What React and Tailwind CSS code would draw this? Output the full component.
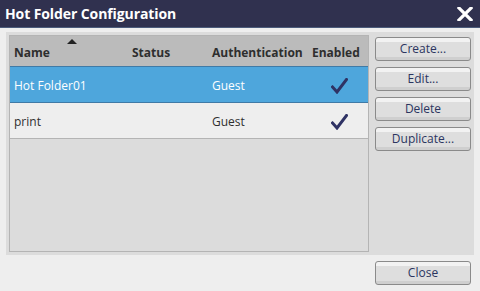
import React from "react";

const rows = [
  { name: "Hot Folder01", status: "", auth: "Guest", enabled: true, selected: true },
  { name: "print", status: "", auth: "Guest", enabled: true, selected: false },
];

function Check() {
  return (
    <svg width="17" height="16" viewBox="0 0 17 16" className="block">
      <path
        d="M1.5 9 L6 14 L15.5 1.5"
        fill="none"
        stroke="#2f3264"
        strokeWidth="3"
        strokeLinecap="square"
        strokeLinejoin="miter"
      />
    </svg>
  );
}

function DlgButton({ children, className = "" }) {
  return (
    <button
      className={`h-[24px] w-[96px] rounded-[3px] border border-[#8a8a8a] bg-[linear-gradient(to_bottom,#f2f2f2_0px,#f2f2f2_4px,#dedede_4px,#dedede_19px,#cfcfcf_19px)] text-[12px] leading-none text-[#2b3560] ${className}`}
    >
      {children}
    </button>
  );
}

export default function App() {
  return (
    <div className="flex h-[291px] w-[480px] flex-col bg-[#eeeeee] font-['Open_Sans',sans-serif]">
      <div className="flex h-[28px] shrink-0 items-center justify-between border-b border-[#4b5b7b] bg-[#30314f] pl-[5px] pr-[7px]">
        <span className="text-[14px] font-bold tracking-[-0.1px] text-white">
          Hot Folder Configuration
        </span>
        <svg width="16" height="14" viewBox="0 0 16 14" className="block">
          <path
            d="M2 1 L14 13 M14 1 L2 13"
            stroke="#ffffff"
            strokeWidth="3.2"
            strokeLinecap="square"
          />
        </svg>
      </div>

      <div className="mx-[6px] mt-[4px] flex h-[223px] gap-[6px] bg-[#dcdcdc] p-[3px]">
        <div className="flex w-[360px] flex-col border border-[#b4b4b4] bg-[#dcdcdc]">
          <div className="relative flex h-[31px] shrink-0 items-end border-b border-[#3f7aa6] bg-[#bbbbbb] pb-[4px] text-[12px] font-bold text-[#2e2e2e]">
            <span className="absolute left-[57px] top-[3px] h-0 w-0 border-x-[5px] border-b-[5px] border-x-transparent border-b-[#222]" />
            <span className="w-[122px] pl-[4px]">Name</span>
            <span className="w-[80px]">Status</span>
            <span className="w-[100px]">Authentication</span>
            <span>Enabled</span>
          </div>
          {rows.map((r) => (
            <div
              key={r.name}
              className={`flex h-[36px] shrink-0 items-center border-b pt-[3px] text-[12px] ${
                r.selected
                  ? "border-[#3f7aa6] bg-[#4ea6dc] text-white"
                  : "border-[#b4b4b4] bg-[#eeeeee] text-[#2e2e2e]"
              }`}
            >
              <span className="w-[122px] pl-[4px]">{r.name}</span>
              <span className="w-[80px]">{r.status}</span>
              <span className="w-[100px]">{r.auth}</span>
              <span className="flex w-[54px] justify-center">
                {r.enabled && <Check />}
              </span>
            </div>
          ))}
        </div>

        <div className="flex flex-col gap-[6px] pt-[2px]">
          <DlgButton>Create...</DlgButton>
          <DlgButton>Edit...</DlgButton>
          <DlgButton>Delete</DlgButton>
          <DlgButton>Duplicate...</DlgButton>
        </div>
      </div>

      <div className="flex justify-end pr-[9px] pt-[6px]">
        <DlgButton>Close</DlgButton>
      </div>
    </div>
  );
}
